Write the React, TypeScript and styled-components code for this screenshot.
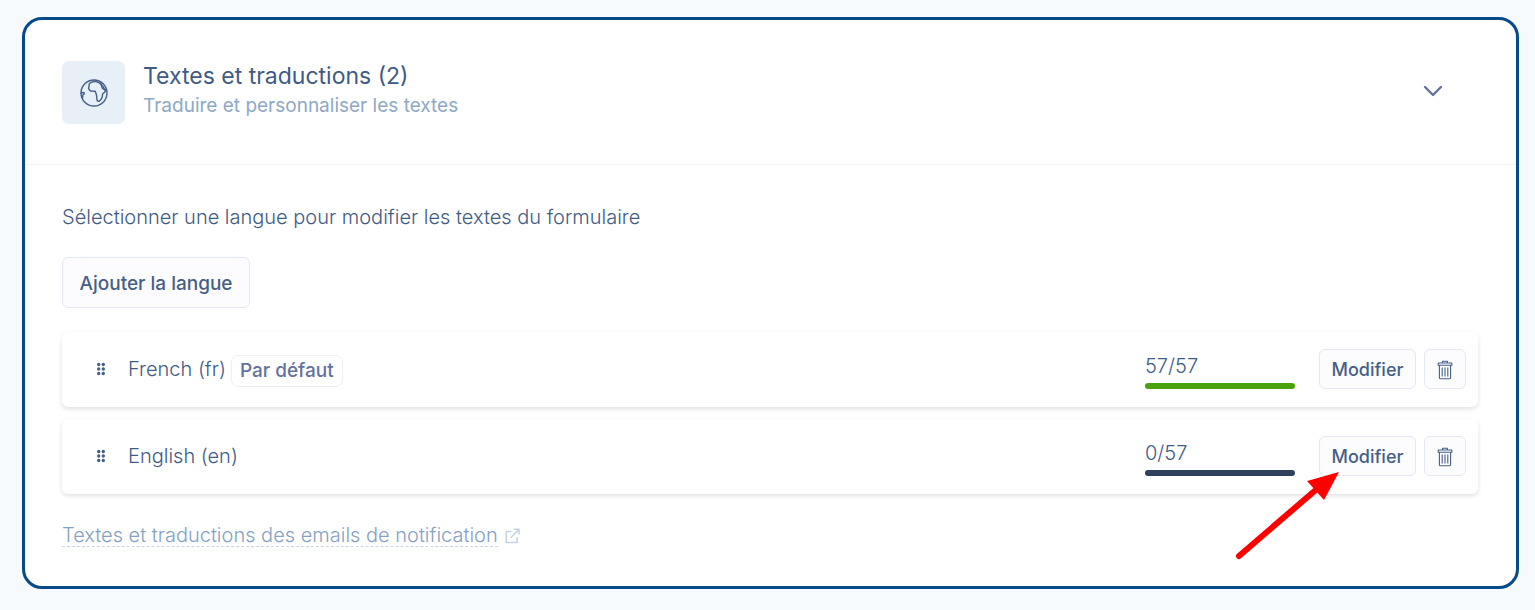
import React from "react";
import styled, { createGlobalStyle } from "styled-components";

const GlobalStyle = createGlobalStyle`
  *, *::before, *::after { box-sizing: border-box; }
  body {
    margin: 0;
    background: #f6fafd;
    color: #3f5b85;
    font-family: Inter, "Liberation Sans", sans-serif;
    font-size: 20px;
    font-weight: 300;
    line-height: 30px;
  }
`;

const Page = styled.main`
  padding: 17px 16px 21px 22px;
`;

const Card = styled.section`
  background: #fff;
  border: 3px solid #064a87;
  border-radius: 20px;
`;

const CardHeader = styled.header`
  display: flex;
  align-items: center;
  gap: 18px;
  padding: 41px 70px 40px 37px;
  border-bottom: 1px solid #f1f3f5;
`;

const IconTile = styled.div`
  display: grid;
  place-items: center;
  width: 63px;
  height: 63px;
  border-radius: 7px;
  background: #e7eff7;
`;

const Heading = styled.div`
  flex: 1;
  height: 63px;
`;

const Title = styled.h2`
  margin: 0;
  font-size: 23px;
  font-weight: 400;
  line-height: 30px;
`;

const Subtitle = styled.p`
  margin: 0;
  color: #8ea8c7;
  font-size: 19px;
  font-weight: 400;
`;

const Toggle = styled.button`
  display: grid;
  place-items: center;
  width: 26px;
  height: 26px;
  margin-bottom: 4px;
  padding: 0;
  border: 0;
  background: none;
  color: #65719d;
  cursor: pointer;
`;

const CardBody = styled.div`
  padding: 37px 38px 36px 37px;
`;

const Intro = styled.p`
  margin: 0 0 25px;
`;

const Button = styled.button<{ $size?: "large" | "small" | "icon" }>`
  display: inline-flex;
  align-items: center;
  justify-content: center;
  width: ${({ $size }) =>
    $size === "large" ? "188px" : $size === "icon" ? "42px" : "97px"};
  height: ${({ $size }) => ($size === "large" ? "51px" : "40px")};
  padding: 2px 0 0;
  border: 1px solid #e2e9f4;
  border-radius: 6px;
  background: #fcfcff;
  color: #465f86;
  font: inherit;
  font-size: ${({ $size }) => ($size === "large" ? "19px" : "18px")};
  font-weight: 500;
  white-space: nowrap;
  cursor: pointer;
`;

const LanguageList = styled.ul`
  display: flex;
  flex-direction: column;
  gap: 12px;
  margin: 24px 0 26px;
  padding: 0;
  list-style: none;
`;

const LanguageRow = styled.li`
  display: flex;
  align-items: center;
  min-height: 75px;
  padding: 0 12px 2px 34px;
  border-radius: 6px;
  background: #fff;
  box-shadow: 0 2px 4px rgba(30, 40, 60, 0.14);
`;

const DragHandle = styled.svg`
  flex: none;
  width: 10px;
  height: 14px;
  margin-right: 22px;
  fill: #465f86;
`;

const LanguageName = styled.div`
  display: flex;
  flex: 1;
  align-items: center;
  gap: 5px;
`;

const Badge = styled.span`
  height: 32px;
  margin-top: 4px;
  padding: 0 8px;
  border: 1px solid #eaf0f6;
  border-radius: 7px;
  color: #65719d;
  font-size: 19px;
  font-weight: 500;
`;

const Progress = styled.div`
  width: 150px;
  margin-right: 24px;
`;

const Count = styled.div`
  line-height: 34px;
`;

const Track = styled.div`
  height: 6px;
  overflow: hidden;
  border-radius: 3px;
  background: #2e405b;
`;

const Fill = styled.div`
  height: 100%;
  background: #48a30c;
`;

const Actions = styled.div`
  position: relative;
  display: flex;
  gap: 8px;
`;

const Pointer = styled.svg`
  position: absolute;
  top: 29px;
  left: -89px;
  width: 115px;
  height: 100px;
  pointer-events: none;
`;

const NotificationLink = styled.a`
  display: inline-flex;
  align-items: center;
  gap: 7px;
  color: #86a1c3;
  text-decoration: none;
`;

const LinkText = styled.span`
  line-height: 22px;
  border-bottom: 1px dashed #c9d6e6;
`;

const GlobeIcon = () => (
  <svg width="28" height="28" viewBox="0 0 28 28" fill="none" stroke="#465f86" strokeWidth="1.4" strokeLinejoin="round" strokeLinecap="round" aria-hidden="true">
    <circle cx="14" cy="14" r="13" />
    <path d="M9.4 4.6 12 3l3.4-.6 4 1.4 1.8 2 1.2 3.4 2 1.6 1.8-.2-1.6 2.6-2 1.8-.4 3.2-1.4 2.6-2 1.6-1.6-.6-.8-6.2-1.2-3.4-4.8-.2-1.8-2.2z" />
    <path d="m20.4 4.2 3 4 1.2 2.2M1.2 14l2.6-.6.6 1.4-1.6 1.2-.2 3.2" />
  </svg>
);

const ChevronIcon = () => (
  <svg width="20" height="12" viewBox="0 0 20 12" fill="none" stroke="currentColor" strokeWidth="2.4" strokeLinecap="round" strokeLinejoin="round" aria-hidden="true">
    <path d="m2 2 8 8 8-8" />
  </svg>
);

const TrashIcon = () => (
  <svg width="16" height="20" viewBox="0 0 16 20" fill="none" stroke="currentColor" strokeWidth="1.1" strokeLinejoin="round" aria-hidden="true">
    <path d="M1.2 3h13.6v2.2H1.2zM5.6 3V1.2h4.8V3M2.4 5.2v12.2c0 .8.5 1.4 1.3 1.4h8.6c.8 0 1.3-.6 1.3-1.4V5.2M5.2 7.4v9M8 7.4v9M10.8 7.4v9" />
  </svg>
);

const ExternalIcon = () => (
  <svg width="15" height="16" viewBox="0 0 15 16" fill="none" stroke="#c5d2e3" strokeWidth="1.5" strokeLinecap="round" strokeLinejoin="round" aria-hidden="true">
    <path d="M6 3.5H1.2v11h11V9.8M9.2 1.2H14V6M13.8 1.4 6 9.4" />
  </svg>
);

const languages = [
  { label: "French (fr)", isDefault: true, done: 57, total: 57, highlighted: false },
  { label: "English (en)", isDefault: false, done: 0, total: 57, highlighted: true },
];

export default function App() {
  return (
    <>
      <GlobalStyle />
      <Page>
        <Card>
          <CardHeader>
            <IconTile>
              <GlobeIcon />
            </IconTile>
            <Heading>
              <Title>Textes et traductions (2)</Title>
              <Subtitle>Traduire et personnaliser les textes</Subtitle>
            </Heading>
            <Toggle aria-label="Replier" aria-expanded="true">
              <ChevronIcon />
            </Toggle>
          </CardHeader>
          <CardBody>
            <Intro>Sélectionner une langue pour modifier les textes du formulaire</Intro>
            <Button $size="large">Ajouter la langue</Button>
            <LanguageList>
              {languages.map(({ label, isDefault, done, total, highlighted }) => (
                <LanguageRow key={label}>
                  <DragHandle viewBox="0 0 10 14" aria-hidden="true">
                    {[2.5, 7, 11.5].map((y) => (
                      <React.Fragment key={y}>
                        <circle cx="2.7" cy={y} r="1.7" />
                        <circle cx="7.3" cy={y} r="1.7" />
                      </React.Fragment>
                    ))}
                  </DragHandle>
                  <LanguageName>
                    {label}
                    {isDefault && <Badge>Par défaut</Badge>}
                  </LanguageName>
                  <Progress>
                    <Count>{done}/{total}</Count>
                    <Track role="progressbar" aria-label={label} aria-valuenow={done} aria-valuemin={0} aria-valuemax={total}>
                      <Fill style={{ width: `${(done / total) * 100}%` }} />
                    </Track>
                  </Progress>
                  <Actions>
                    <Button>Modifier</Button>
                    <Button $size="icon" aria-label="Supprimer">
                      <TrashIcon />
                    </Button>
                    {highlighted && (
                      <Pointer viewBox="0 0 115 100" aria-hidden="true">
                        <path d="M9 91 88 23" stroke="#f00" strokeWidth="6" strokeLinecap="round" />
                        <path d="M109 7 77 16l17 19z" fill="#f00" />
                      </Pointer>
                    )}
                  </Actions>
                </LanguageRow>
              ))}
            </LanguageList>
            <NotificationLink href="#notifications">
              <LinkText>Textes et traductions des emails de notification</LinkText>
              <ExternalIcon />
            </NotificationLink>
          </CardBody>
        </Card>
      </Page>
    </>
  );
}
